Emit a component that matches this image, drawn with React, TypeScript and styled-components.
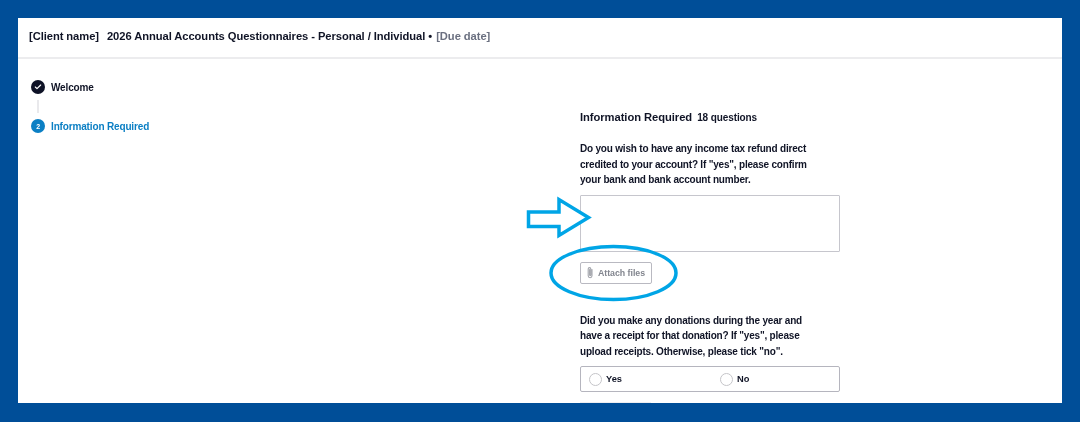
import React from 'react'
import styled, { createGlobalStyle } from 'styled-components'
import { Check } from 'lucide-react'

const GlobalStyle = createGlobalStyle`
  html, body {
    margin: 0;
    padding: 0;
    height: 422px;
    overflow: hidden;
    background: #004e98;
    font-family: "Liberation Sans", Arial, sans-serif;
    color: #101426;
  }
`

const Frame = styled.div`
  height: 422px;
  box-sizing: border-box;
  padding: 18px 18px 19px;
  background: #004e98;
`

const Panel = styled.div`
  position: relative;
  height: 385px;
  overflow: hidden;
  background: #fff;
`

// the reference is a slightly soft, scaled-up capture
const Header = styled.header`
  height: 41px;
  box-sizing: border-box;
  display: flex;
  align-items: center;
  gap: 8px;
  padding: 0 0 3px 11px;
  border-bottom: 2px solid #ececee;
  font-size: 11.2px;
  letter-spacing: -0.07px;
  font-weight: 700;
  filter: blur(0.3px);
`

const DueDate = styled.span`
  margin-left: 1px;
  color: #6b7080;
`

const Body = styled.div`
  display: grid;
  grid-template-columns: 562px 260px;
  filter: blur(0.3px);
`

const Steps = styled.nav`
  padding: 21px 0 0 13px;
`

const Step = styled.div<{ $active?: boolean }>`
  display: flex;
  align-items: center;
  gap: 6px;
  height: 14px;
  font-size: 10px;
  letter-spacing: -0.15px;
  font-weight: 700;
  color: ${p => (p.$active ? '#0b7fc4' : '#101426')};
`

const StepBadge = styled.span<{ $active?: boolean }>`
  width: 14px;
  height: 14px;
  flex: none;
  display: flex;
  align-items: center;
  justify-content: center;
  border-radius: 50%;
  font-size: 7px;
  color: #fff;
  background: ${p => (p.$active ? '#0b7fc4' : '#0e1226')};
`

const Connector = styled.div`
  width: 2px;
  height: 13px;
  margin: 6px 0 6px 6px;
  background: #e9e9ec;
`

const Main = styled.main`
  padding-top: 51px;
`

const Title = styled.h2`
  margin: 0 0 17px;
  display: flex;
  align-items: baseline;
  gap: 5px;
  height: 14px;
  line-height: 14px;
  font-size: 11.2px;
  letter-spacing: -0.05px;
  font-weight: 700;
`

const Count = styled.span`
  font-size: 10px;
  letter-spacing: -0.1px;
`

const Question = styled.p`
  margin: 0 0 7px;
  font-size: 10px;
  letter-spacing: -0.2px;
  line-height: 15.5px;
  font-weight: 700;
`

const AnswerBox = styled.div`
  height: 57px;
  box-sizing: border-box;
  border: 1px solid #c6c6cd;
  border-radius: 1px;
`

const AttachButton = styled.button`
  display: flex;
  align-items: center;
  gap: 4px;
  width: 72px;
  height: 22px;
  box-sizing: border-box;
  margin: 10px 0 29px;
  padding: 0 0 0 6px;
  background: #fff;
  border: 1px solid #b9b9c1;
  border-radius: 2px;
  font-family: inherit;
  font-size: 8.8px;
  letter-spacing: -0.03px;
  font-weight: 700;
  color: #83868f;
`

const RadioRow = styled.div`
  display: grid;
  grid-template-columns: 131px 1fr;
  align-items: center;
  height: 26px;
  box-sizing: border-box;
  padding-left: 8px;
  border: 1px solid #b5b5be;
  border-radius: 2px;
`

const RadioOption = styled.label`
  display: flex;
  align-items: center;
  gap: 4px;
  font-size: 9.3px;
  font-weight: 700;
`

const RadioDot = styled.span`
  width: 13px;
  height: 13px;
  box-sizing: border-box;
  border: 1px solid #c4c4c8;
  border-radius: 50%;
`

const NextButtonEdge = styled.div`
  width: 71px;
  height: 22px;
  margin-top: 10px;
  background: #eeeef1;
`

const Annotations = styled.svg`
  position: absolute;
  inset: 0;
  width: 1044px;
  height: 385px;
  pointer-events: none;
`

const ClipIcon = () => (
  <svg width="7" height="13" viewBox="0 0 7 13" fill="none" stroke="#a2a4ab" strokeWidth="1.1" strokeLinecap="round">
    <path d="M5 3.5 V9.8 A1.9 1.9 0 0 1 1.2 9.8 V2.9 A1.3 1.3 0 0 1 3.8 2.9 V9 A.6 .6 0 0 1 2.6 9 V3.5" />
  </svg>
)

export default function App() {
  return (
    <>
      <GlobalStyle />
      <Frame>
        <Panel>
          <Header>
            <span>[Client name]</span>
            <span>
              2026 Annual Accounts Questionnaires - Personal / Individual • <DueDate>[Due date]</DueDate>
            </span>
          </Header>
          <Body>
            <Steps>
              <Step>
                <StepBadge>
                  <Check size={8} strokeWidth={3.5} />
                </StepBadge>
                Welcome
              </Step>
              <Connector />
              <Step $active>
                <StepBadge $active>2</StepBadge>
                Information Required
              </Step>
            </Steps>
            <Main>
              <Title>
                Information Required <Count>18 questions</Count>
              </Title>
              <Question>
                Do you wish to have any income tax refund direct
                <br />
                credited to your account? If "yes", please confirm
                <br />
                your bank and bank account number.
              </Question>
              <AnswerBox />
              <AttachButton>
                <ClipIcon />
                Attach files
              </AttachButton>
              <Question>
                Did you make any donations during the year and
                <br />
                have a receipt for that donation? If "yes", please
                <br />
                upload receipts. Otherwise, please tick "no".
              </Question>
              <RadioRow>
                <RadioOption>
                  <RadioDot />
                  Yes
                </RadioOption>
                <RadioOption>
                  <RadioDot />
                  No
                </RadioOption>
              </RadioRow>
              <NextButtonEdge />
            </Main>
          </Body>
          <Annotations viewBox="0 0 1044 385">
            <path
              d="M510.5 194 H541 V181.5 L570.5 199.5 L541 217.5 V208.5 H510.5 Z"
              fill="#fff"
              stroke="#00a5e6"
              strokeWidth="3.5"
            />
            <ellipse cx="595.5" cy="255" rx="62.5" ry="26.5" fill="none" stroke="#00a5e6" strokeWidth="3.5" />
          </Annotations>
        </Panel>
      </Frame>
    </>
  )
}
